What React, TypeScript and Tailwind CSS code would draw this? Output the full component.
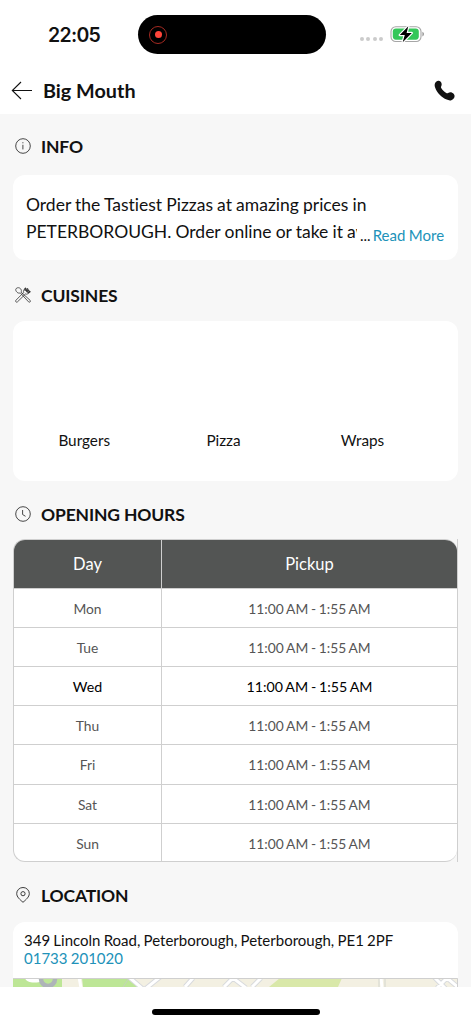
import type { ReactNode } from "react";

const cuisines = [
  { name: "Burgers", width: "w-[142.5px]" },
  { name: "Pizza", width: "w-[136px]" },
  { name: "Wraps", width: "w-[142px]" },
];

const days = ["Mon", "Tue", "Wed", "Thu", "Fri", "Sat", "Sun"];
const today = "Wed";

function StatusBar() {
  return (
    <div className="flex h-[68px] shrink-0 items-start">
      <span className="w-[138px] pl-12 pt-[22px] font-['Inter'] text-[19.5px] font-semibold leading-[26px] tracking-[-0.7px]">
        22:05
      </span>
      <div className="mt-[15px] flex h-[39px] w-[188px] items-center rounded-full bg-black pl-[11px]">
        <div className="flex size-[18px] items-center justify-center rounded-full border border-[#a52a22]">
          <div className="size-[7px] rounded-full bg-[#ff453a]" />
        </div>
      </div>
      <div className="ml-[34px] mt-[37px] flex gap-[2.4px]">
        <span className="size-1 rounded-full bg-[#cbcbcb]" />
        <span className="size-1 rounded-full bg-[#cbcbcb]" />
        <span className="size-1 rounded-full bg-[#cbcbcb]" />
        <span className="size-1 rounded-full bg-[#cbcbcb]" />
      </div>
      <svg className="ml-[7px] mt-[25px]" width="35" height="18" viewBox="0 0 35 18">
        <rect x="1" y="1.7" width="30" height="14.8" rx="4.8" fill="none" stroke="#a6a6a6" strokeWidth="1.1" />
        <path d="M32.4 6.8v4.6c1-.4 1.6-1.3 1.6-2.3s-.6-1.9-1.6-2.3z" fill="#9a9a9a" />
        <rect x="2.8" y="3.5" width="26" height="11.2" rx="3.1" fill="#34c759" />
        <path
          d="M18.3 1.3 9.8 10h5l-2.1 7.2L21.8 8h-5.2z"
          fill="#000"
          stroke="#fff"
          strokeWidth="2.4"
          strokeLinejoin="round"
          paintOrder="stroke"
        />
      </svg>
    </div>
  );
}

function Header() {
  return (
    <header className="flex h-[46px] shrink-0 items-center pb-[2px] pl-[11px] pr-[16px]">
      <button aria-label="Back">
        <svg width="21" height="19" viewBox="0 0 21 19" fill="none" stroke="#111" strokeWidth="1.1">
          <path d="M10 1 1.3 9.5 10 18M1.3 9.5H21" />
        </svg>
      </button>
      <h1 className="ml-[11px] flex-1 text-[19.8px] font-bold leading-6 text-[#111]">Big Mouth</h1>
      <button aria-label="Call">
        <svg width="21" height="21" viewBox="0 0 21 21" fill="#111">
          <path d="M1.1 3.1C1.8 1.6 3.2.6 4.7.8c1.3.1 2.3 1 2.7 2.2.4 1.1.4 2.3-.2 3.3-.3.6-.4 1.2 0 1.8 1.2 2.1 3 3.8 5.1 5 .6.3 1.2.2 1.8-.1 1.2-.7 2.7-.9 4-.3 1.4.6 2.4 1.8 2.5 3.2.1 1.9-1.8 4-3.8 4.5-1.4.3-2.8-.2-4.1-.8C7.5 17.5 3.1 13 1.2 7.8.6 6.2.4 4.6 1.1 3.1z" />
        </svg>
      </button>
    </header>
  );
}

function InfoIcon() {
  return (
    <svg width="16" height="16" viewBox="0 0 16 16" fill="none" stroke="#333" strokeWidth="0.9">
      <circle cx="8" cy="8" r="7.3" />
      <path d="M7.9 6.8v4.6M7.9 4.2v1.1" />
    </svg>
  );
}

function CutleryIcon() {
  return (
    <svg width="16" height="16" viewBox="0 0 16 16" fill="none" stroke="#333" strokeWidth="0.8" strokeLinejoin="round">
      {/* spoon */}
      <path d="M1.2 1.5C2.5.2 4.7.6 5.6 1.8c.9 1.1 1 2.3.5 3.3l9.1 8.3c.4.5.3 1.1-.1 1.5-.5.4-1 .4-1.5 0L5.3 5.9c-1.1.5-2.4.2-3.3-.7C.9 4.1.2 2.6 1.2 1.5z" />
      {/* fork */}
      <path d="M10.4.6 8.7 3.4c-.4.7-.3 1.3.1 1.9L.9 13.3c-.4.5-.4 1.1 0 1.5.5.5 1.1.5 1.6 0l8.1-7.9c.6.4 1.3.4 1.9 0l3-2" />
      <path d="m10.9 1-1.3 2.5M12.8 1.3l-2 2.8M14 2.7 11.5 5M15.2 4.2 12.6 6" strokeWidth="1.4" />
    </svg>
  );
}

function ClockIcon() {
  return (
    <svg width="16" height="16" viewBox="0 0 16 16" fill="none" stroke="#333" strokeWidth="0.9">
      <circle cx="8" cy="8" r="7.3" />
      <path d="M7.6 4v4.5l2.9 1.8" />
    </svg>
  );
}

function PinIcon() {
  return (
    <svg width="16" height="16" viewBox="0 0 16 16" fill="none" stroke="#333" strokeWidth="0.95">
      <path d="M8 15.3C5 12.7 1.7 9.9 1.7 6.6a6.3 6.1 0 0 1 12.6 0C14.3 9.9 11 12.7 8 15.3z" />
      <circle cx="8" cy="6.7" r="2.1" />
    </svg>
  );
}

function SectionTitle({ icon, children }: { icon: ReactNode; children: ReactNode }) {
  return (
    <div className="flex h-6 items-center gap-[10px] pl-[2px]">
      {icon}
      <h2 className="pt-px text-[17.5px] font-bold leading-6 tracking-[-0.15px] text-[#111]">{children}</h2>
    </div>
  );
}

function HoursTable() {
  return (
    <div className="mt-[14px] h-[323px] border-r border-[#cfcfcf]">
      <div className="h-full overflow-hidden rounded-xl border border-r-0 border-[#cfcfcf] bg-white text-center">
        <div className="flex h-[47.6px] bg-[#535554] text-[16.5px] leading-[49px] text-white">
          <div className="w-[148px] border-r border-[#cfcfcf]">Day</div>
          <div className="flex-1">Pickup</div>
        </div>
        {days.map((day) => (
          <div
            key={day}
            className={
              day === today
                ? "flex h-[39.2px] border-t border-[#cfcfcf] text-[14.2px] leading-[40px] text-black"
                : "flex h-[39.2px] border-t border-[#cfcfcf] text-[13.8px] leading-[39px] text-[#555]"
            }
          >
            <div className="w-[148px] border-r border-[#cfcfcf]">{day}</div>
            <div className="flex-1 [word-spacing:-0.8px]">11:00 AM - 1:55 AM</div>
          </div>
        ))}
      </div>
    </div>
  );
}

function MapStrip() {
  return (
    <svg className="block" width="445" height="9" viewBox="0 0 445 9">
      <rect width="445" height="9" fill="#f3f0e2" />
      <path d="M0 0h49v9H0zM69 0h47l10 9H70z" fill="#bde696" />
      <path d="M267 0h62l-4 9h-69z" fill="#d9e8a9" />
      <path d="M12 0c2 5 8 5 15 4V0z" fill="#fff" />
      <circle cx="35" cy="1" r="7" fill="none" stroke="#aeb4b8" strokeWidth="4.5" />
      <g fill="none" stroke="#d8dadd" strokeWidth="5">
        <path d="M116-1l15 13L147-1M211 9l9-9 13 10M172 9l8-9M239 9l9-9M421-1l13 13M424 10l10-10 12 10" />
      </g>
      <g fill="none" stroke="#fff" strokeWidth="3">
        <path d="M66-1l2 11M116-1l15 13L147-1M211 9l9-9 13 10M172 9l8-9M239 9l9-9M368 0l1 9M421-1l13 13M424 10l10-10 12 10" />
      </g>
      <path d="M116 0l-6 9M366 0v9M372 0v9" stroke="#c5ccc5" strokeWidth="0.7" />
      <path d="M0 .5h444.5V9" fill="none" stroke="#cfcfcf" />
    </svg>
  );
}

export default function App() {
  return (
    <div className="flex h-[1024px] w-[471px] flex-col overflow-hidden bg-white font-['Lato',sans-serif] text-[#111] [font-variant-ligatures:none]">
      <StatusBar />
      <Header />

      <main className="h-[873px] overflow-hidden bg-[#f7f7f7] px-[13px] pt-5">
        <SectionTitle icon={<InfoIcon />}>INFO</SectionTitle>
        <div className="mt-[17px] h-[85px] rounded-xl bg-white pl-[13px] pt-4 text-[17.5px] leading-[27px] [word-spacing:-0.35px]">
          <p>Order the Tastiest Pizzas at amazing prices in</p>
          <div className="flex h-[27px] items-start whitespace-nowrap">
            <p className="w-[331px] overflow-hidden">PETERBOROUGH. Order online or take it away</p>
            <span className="ml-[3px] mt-[4px] flex gap-[2px] text-[15px]">
              <span>...</span>
              <a className="text-[#2192b9]">Read More</a>
            </span>
          </div>
        </div>

        <div className="mt-[23px]">
          <SectionTitle icon={<CutleryIcon />}>CUISINES</SectionTitle>
        </div>
        <div className="mt-[14px] flex h-[160px] rounded-xl bg-white pt-[108px] text-center text-[15.3px] leading-[22px]">
          {cuisines.map((c) => (
            <span key={c.name} className={c.width}>
              {c.name}
            </span>
          ))}
        </div>

        <div className="mt-[21px]">
          <SectionTitle icon={<ClockIcon />}>OPENING HOURS</SectionTitle>
        </div>
        <div className="-mt-px">
          <HoursTable />
        </div>

        <div className="mt-[21px]">
          <SectionTitle icon={<PinIcon />}>LOCATION</SectionTitle>
        </div>
        <div className="mt-[15px] overflow-hidden rounded-t-xl bg-white">
          <div className="h-[56px] pl-[11px] pt-[9px] text-[15px] leading-[18px] [word-spacing:-0.6px]">
            <p>349 Lincoln Road, Peterborough, Peterborough, PE1 2PF</p>
            <a className="block text-[#2192b9]">01733 201020</a>
          </div>
          <MapStrip />
        </div>
      </main>

      <div className="flex flex-1 justify-center pt-[22px]">
        <div className="h-[6px] w-[168px] rounded-full bg-black" />
      </div>
    </div>
  );
}
